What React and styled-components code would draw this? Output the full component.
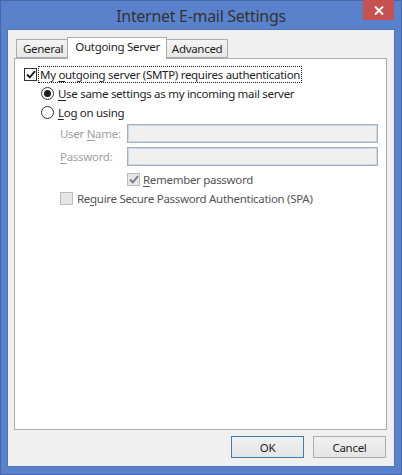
import React from 'react';
import styled, { createGlobalStyle } from 'styled-components';

const GlobalStyle = createGlobalStyle`
  html, body {
    margin: 0;
    padding: 0;
    background: #ffffff;
  }
  body {
    font-family: "Noto Sans", "DejaVu Sans", sans-serif;
    font-size: 11.5px;
    letter-spacing: -0.3px;
    color: #1e1e1e;
  }
`;

const Window = styled.div`
  box-sizing: border-box;
  width: 402px;
  height: 475px;
  display: flex;
  flex-direction: column;
  background: #5a82cc;
  border: 1px solid #4668a8;
  padding: 0 7px 8px 7px;
`;

const TitleBar = styled.div`
  height: 29px;
  display: flex;
  align-items: flex-start;
`;

const Title = styled.div`
  flex: 1;
  text-align: center;
  padding-left: 31px;
  font-size: 16px;
  letter-spacing: -0.3px;
  color: #333333;
  line-height: 29px;
  padding-top: 1px;
`;

const CloseButton = styled.div`
  width: 31px;
  height: 20px;
  margin-top: -1px;
  background: #c75050;
  display: flex;
  align-items: center;
  justify-content: center;
`;

const Client = styled.div`
  flex: 1;
  display: flex;
  flex-direction: column;
  background: #f0f0f0;
  padding: 8px 7px 0 6px;
  box-shadow: 0 0 0 1px #5075bb;
`;

const Tabs = styled.div`
  display: flex;
  align-items: flex-end;
  height: 21px;
  margin-left: 2px;
  margin-bottom: -1px;
  position: relative;
  z-index: 1;
`;

const Tab = styled.div`
  box-sizing: border-box;
  height: ${(p) => (p.$active ? '22px' : '19px')};
  padding: ${(p) => (p.$active ? '0 6px 3px 7px' : '0 5px 0 6px')};
  margin: ${(p) => (p.$active ? '0 -1px 0 -2px' : '0 0 1px 0')};
  background: ${(p) => (p.$active ? '#ffffff' : 'linear-gradient(#f3f3f3, #e8e8e8)')};
  border: 1px solid #acacac;
  border-bottom: ${(p) => (p.$active ? 'none' : '1px solid #acacac')};
  border-left-width: ${(p) => (p.$first || p.$active ? '1px' : '0')};
  display: flex;
  align-items: center;
  line-height: 1;
  color: #1e1e1e;
  position: relative;
  z-index: ${(p) => (p.$active ? 2 : 1)};
`;

const Panel = styled.div`
  box-sizing: border-box;
  height: 372px;
  background: #ffffff;
  border: 1px solid #acacac;
  padding: 6px 8px 0 9px;
  display: flex;
  flex-direction: column;
`;

const Row = styled.div`
  display: flex;
  align-items: center;
  height: ${(p) => p.$h || 19}px;
  margin-top: ${(p) => p.$mt || 0}px;
  padding-left: ${(p) => p.$indent || 0}px;
  gap: ${(p) => p.$gap ?? 4}px;
  color: ${(p) => p.$color || '#1e1e1e'};
`;

const Box = styled.span`
  box-sizing: border-box;
  width: 13px;
  height: 13px;
  flex-shrink: 0;
  border: 1px solid ${(p) => (p.$disabled ? '#bcbcbc' : '#333333')};
  background: ${(p) => (p.$disabled ? '#e6e6e6' : '#ffffff')};
  display: flex;
  align-items: center;
  justify-content: center;
`;

const Radio = styled.span`
  box-sizing: border-box;
  width: 13px;
  height: 13px;
  flex-shrink: 0;
  border-radius: 50%;
  border: 1px solid #333333;
  background: #ffffff;
  display: flex;
  align-items: center;
  justify-content: center;
  &::after {
    content: '';
    display: ${(p) => (p.$checked ? 'block' : 'none')};
    width: 7px;
    height: 7px;
    border-radius: 50%;
    background: #1e1e1e;
  }
`;

const Focus = styled.span`
  outline: 1px dotted #1e1e1e;
  padding: 0 1px;
  margin-left: -1px;
  line-height: 15px;
`;

const Key = styled.span`
  text-decoration: underline;
  text-underline-offset: 2px;
`;

const FieldLabel = styled.span`
  width: 67px;
  flex-shrink: 0;
  color: #a0a0a0;
  white-space: nowrap;
`;

const Input = styled.div`
  box-sizing: border-box;
  width: 251px;
  height: 19px;
  background: #f0f0f0;
  border: 1px solid #abadb3;
  box-shadow: inset 0 0 0 1px #c5daf0;
`;

const Footer = styled.div`
  display: flex;
  justify-content: flex-end;
  gap: 9px;
  margin-top: 6px;
  margin-right: 1px;
`;

const Button = styled.div`
  box-sizing: border-box;
  width: 73px;
  height: 22px;
  display: flex;
  align-items: center;
  justify-content: center;
  background: linear-gradient(#f0f0f0, #e5e5e5);
  border: 1px solid ${(p) => (p.$default ? '#3c7fb1' : '#acacac')};
  color: #1e1e1e;
`;

function Check({ color }) {
  return (
    <svg width="10" height="9" viewBox="0 0 10 9">
      <path d="M1 4.5 L3.8 7.3 L9 1.2" fill="none" stroke={color} strokeWidth="1.9" />
    </svg>
  );
}

export default function App() {
  return (
    <>
      <GlobalStyle />
      <Window>
        <TitleBar>
          <Title>Internet E-mail Settings</Title>
          <CloseButton>
            <svg width="10" height="9" viewBox="0 0 10 9">
              <path d="M1 0.5 L9 8.5 M9 0.5 L1 8.5" stroke="#ffffff" strokeWidth="2" />
            </svg>
          </CloseButton>
        </TitleBar>
        <Client>
          <Tabs>
            <Tab $first>General</Tab>
            <Tab $active>Outgoing Server</Tab>
            <Tab>Advanced</Tab>
          </Tabs>
          <Panel>
            <Row $h={18} $gap={3}>
              <Box>
                <Check color="#1e1e1e" />
              </Box>
              <Focus>
                My <Key>o</Key>utgoing server (SMTP) requires authentication
              </Focus>
            </Row>
            <Row $indent={17} $mt={1}>
              <Radio $checked />
              <span>
                <Key>U</Key>se same settings as my incoming mail server
              </span>
            </Row>
            <Row $indent={17}>
              <Radio />
              <span>
                <Key>L</Key>og on using
              </span>
            </Row>
            <Row $indent={36} $mt={2} $gap={0}>
              <FieldLabel>
                User <Key>N</Key>ame:
              </FieldLabel>
              <Input />
            </Row>
            <Row $indent={36} $mt={4} $gap={0}>
              <FieldLabel>
                <Key>P</Key>assword:
              </FieldLabel>
              <Input />
            </Row>
            <Row $indent={103} $mt={4} $gap={3} $color="#555555">
              <Box $disabled>
                <Check color="#7a7a7a" />
              </Box>
              <span>
                <Key>R</Key>emember password
              </span>
            </Row>
            <Row $indent={36} $color="#555555">
              <Box $disabled />
              <span>
                Re<Key>q</Key>uire Secure Password Authentication (SPA)
              </span>
            </Row>
          </Panel>
          <Footer>
            <Button $default>OK</Button>
            <Button>Cancel</Button>
          </Footer>
        </Client>
      </Window>
    </>
  );
}
